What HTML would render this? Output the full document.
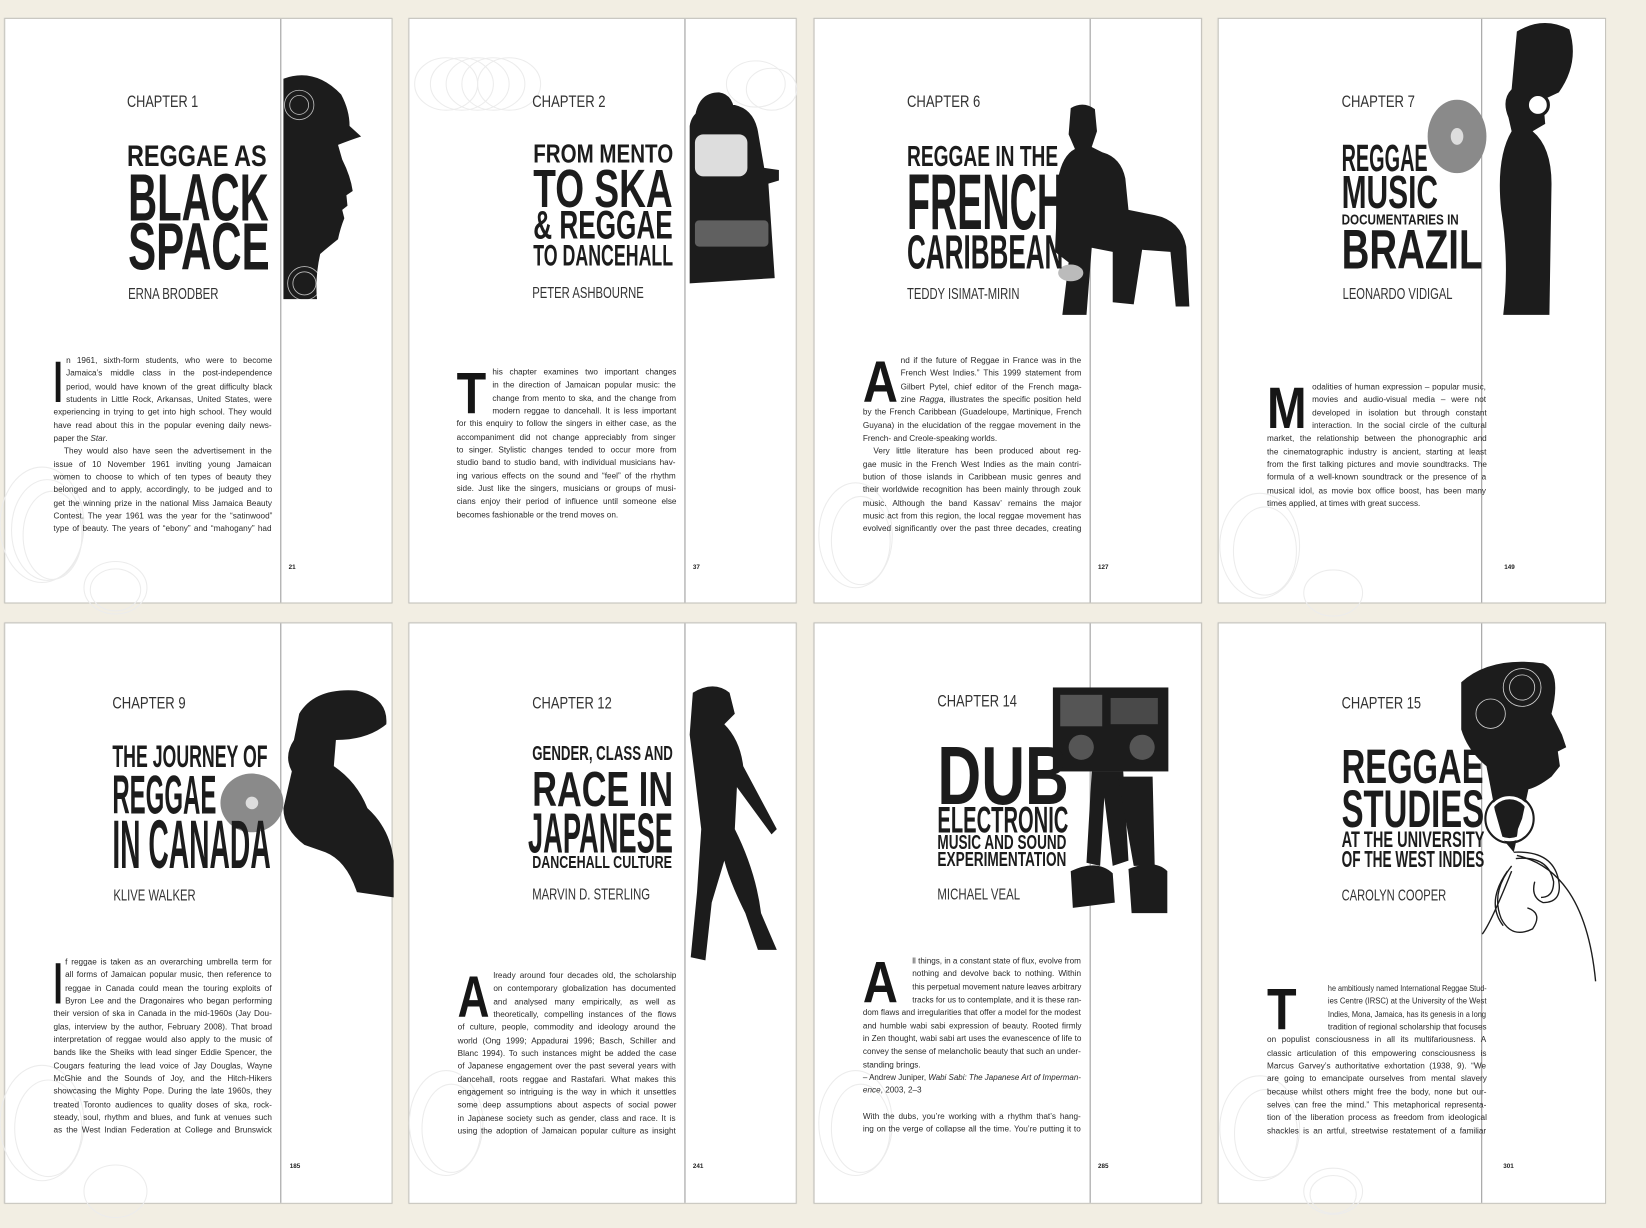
<!DOCTYPE html>
<html><head><meta charset="utf-8"><style>
html,body{margin:0;padding:0;width:1646px;height:1228px;overflow:hidden;background:#f2eee3;}
#c{position:absolute;left:0;top:0;width:1568px;height:1170px;transform:scale(1.04974,1.04957);transform-origin:0 0;font-family:"Liberation Sans",sans-serif;}
.pg{position:absolute;width:370px;background:#fff;border:1px solid #c4c2bb;box-sizing:border-box;box-shadow:0 0 1px #bbb;}
.r1{top:17px;height:558px}.r2{top:593px;height:554px}
.dv{position:absolute;top:0;bottom:0;width:1px;background:#9a9a9a;}
.f{position:absolute;line-height:1;white-space:nowrap;color:#1c1c1c;}
.f span{display:inline-block;transform-origin:0 0;}
.b{font-weight:bold;}
.ch{color:#333;font-weight:normal;}
.bd{position:absolute;font-size:7.8px;color:#2a2a2a;}
.bd div{height:12.35px;line-height:12.35px;white-space:nowrap;overflow:visible;}
.bd div span{display:inline-block;transform-origin:0 50%;}
.dc{position:absolute;font-weight:bold;color:#161616;line-height:1;}
.dc span{display:inline-block;transform-origin:0 0;}
.pn{position:absolute;font-size:6px;font-weight:bold;color:#222;}
svg{position:absolute;left:0;top:0;}
</style></head><body><div id="c">

<div class="pg r1" style="left:4px"><div class="dv" style="left:262px"></div></div>
<div class="pg r1" style="left:389px"><div class="dv" style="left:262px"></div></div>
<div class="pg r1" style="left:775px"><div class="dv" style="left:262px"></div></div>
<div class="pg r1" style="left:1160px"><div class="dv" style="left:250px"></div></div>
<div class="pg r2" style="left:4px"><div class="dv" style="left:262px"></div></div>
<div class="pg r2" style="left:389px"><div class="dv" style="left:262px"></div></div>
<div class="pg r2" style="left:775px"><div class="dv" style="left:262px"></div></div>
<div class="pg r2" style="left:1160px"><div class="dv" style="left:250px"></div></div>

<svg width="1568" height="1170" viewBox="0 0 1568 1170">
<g fill="none" stroke="#ececec" stroke-width="1">
 <ellipse cx="40" cy="500" rx="40" ry="55"/><ellipse cx="45" cy="505" rx="34" ry="48"/><ellipse cx="50" cy="510" rx="28" ry="42"/>
 <ellipse cx="110" cy="560" rx="30" ry="25"/><ellipse cx="110" cy="562" rx="24" ry="20"/>
 <ellipse cx="425" cy="80" rx="30" ry="25"/><ellipse cx="440" cy="80" rx="30" ry="25"/><ellipse cx="455" cy="80" rx="30" ry="25"/><ellipse cx="470" cy="80" rx="30" ry="25"/><ellipse cx="485" cy="80" rx="30" ry="25"/>
 <ellipse cx="720" cy="80" rx="28" ry="22"/><ellipse cx="735" cy="85" rx="24" ry="20"/>
 <ellipse cx="815" cy="510" rx="35" ry="50"/><ellipse cx="820" cy="515" rx="28" ry="42"/>
 <ellipse cx="1200" cy="520" rx="38" ry="50"/><ellipse cx="1205" cy="525" rx="30" ry="42"/><ellipse cx="1270" cy="565" rx="28" ry="22"/>
 <ellipse cx="40" cy="1070" rx="40" ry="55"/><ellipse cx="46" cy="1075" rx="32" ry="46"/><ellipse cx="110" cy="1135" rx="30" ry="25"/>
 <ellipse cx="425" cy="1070" rx="35" ry="50"/><ellipse cx="430" cy="1075" rx="28" ry="42"/>
 <ellipse cx="815" cy="1070" rx="35" ry="50"/><ellipse cx="820" cy="1075" rx="28" ry="42"/>
 <ellipse cx="1200" cy="1075" rx="38" ry="50"/><ellipse cx="1206" cy="1080" rx="30" ry="42"/><ellipse cx="1270" cy="1135" rx="28" ry="22"/><ellipse cx="1270" cy="1138" rx="22" ry="18"/>
</g>
<path fill="#1c1c1c" d="M270 75 Q300 64 325 90 Q333 105 333 120 L344 130 Q332 134 322 138 L326 152 Q334 168 336 182 L330 186 L331 196 L326 200 L328 208 Q324 218 322 228 Q312 236 305 242 Q300 265 302 285 L270 285 Z"/>
<g fill="none" stroke="#fff" stroke-width="0.8" opacity="0.7"><circle cx="285" cy="100" r="14"/><circle cx="285" cy="100" r="9"/><circle cx="290" cy="270" r="16"/><circle cx="290" cy="270" r="11"/></g>
<path fill="#1c1c1c" d="M657 120 Q660 100 690 100 L700 100 Q718 104 722 125 L728 160 L742 162 L742 172 L732 175 L738 265 L657 270 Z"/>
<path fill="#1c1c1c" d="M662 112 Q665 88 685 88 Q700 90 700 112 Z"/>
<rect x="662" y="128" width="50" height="40" rx="8" fill="#fff" opacity=".85"/>
<rect x="662" y="210" width="70" height="25" rx="4" fill="#fff" opacity=".3"/>
<path fill="#1c1c1c" d="M1020 103 Q1032 96 1043 104 L1045 125 L1040 140 L1050 145 Q1068 150 1072 170 L1075 200 L1100 205 Q1125 210 1130 235 L1133 292 L1120 292 L1115 240 L1088 238 L1080 290 L1060 288 L1060 240 L1040 236 L1035 300 L1012 300 L1018 250 L1005 240 L1008 170 Q1012 148 1024 142 L1018 128 Z"/>
<ellipse cx="1020" cy="260" rx="12" ry="8" fill="#bbb"/>
<path fill="#1c1c1c" d="M1445 30 Q1470 15 1495 28 Q1505 60 1485 88 L1470 95 L1472 118 L1460 125 Q1478 140 1478 175 L1476 300 L1432 300 Q1438 250 1430 200 Q1425 150 1440 125 L1437 112 Q1430 95 1440 85 Z"/>
<ellipse cx="1388" cy="130" rx="28" ry="35" fill="#8a8a8a"/><ellipse cx="1388" cy="130" rx="6" ry="8" fill="#ddd"/>
<circle cx="1465" cy="100" r="10" fill="#fff" stroke="#1c1c1c" stroke-width="3"/>
<path fill="#1c1c1c" d="M285 680 Q300 655 340 658 Q370 665 368 690 Q350 705 320 705 L318 730 Q340 745 350 770 Q372 790 375 820 L375 855 L340 850 Q330 820 310 812 L290 805 Q270 790 270 770 L278 735 Q270 720 280 705 Z"/>
<ellipse cx="240" cy="765" rx="30" ry="28" fill="#8a8a8a"/><ellipse cx="240" cy="765" rx="6" ry="6" fill="#ddd"/>
<path fill="#1c1c1c" d="M660 660 Q680 648 695 660 L700 680 L690 690 Q705 705 708 730 L740 790 L735 795 L702 750 L700 790 Q720 830 725 870 L740 905 L722 905 L710 870 Q695 840 690 820 L678 860 L672 915 L658 912 L664 850 L668 790 L662 740 L657 700 Z"/>
<rect x="1003" y="655" width="110" height="80" fill="#1c1c1c"/>
<rect x="1010" y="662" width="40" height="30" fill="#fff" opacity=".25"/><circle cx="1030" cy="712" r="12" fill="#555"/><circle cx="1088" cy="712" r="12" fill="#555"/><rect x="1058" y="665" width="45" height="25" fill="#fff" opacity=".2"/>
<path fill="#1c1c1c" d="M1040 735 L1070 735 L1075 820 L1060 825 L1052 760 L1048 825 L1035 822 Z"/>
<path fill="#1c1c1c" d="M1065 740 L1098 740 L1100 825 L1080 825 Z"/>
<path fill="#1c1c1c" d="M1020 830 Q1045 818 1060 832 L1062 860 L1022 865 Z M1075 828 Q1100 818 1112 830 L1112 870 L1078 870 Z"/>
<path fill="#1c1c1c" d="M1392 650 Q1420 625 1470 632 Q1488 640 1478 680 L1488 700 L1492 712 L1484 716 L1486 730 L1478 740 Q1465 750 1456 752 L1450 780 L1446 790 Q1445 800 1442 812 L1432 800 L1424 772 Q1420 750 1416 730 Q1398 715 1392 695 Z"/>
<circle cx="1438" cy="780" r="20" fill="none" stroke="#fff" stroke-width="3"/><circle cx="1438" cy="780" r="23" fill="none" stroke="#1c1c1c" stroke-width="2"/>
<g fill="none" stroke="#1c1c1c" stroke-width="1.3"><path d="M1442 812 Q1480 810 1485 840 Q1488 860 1470 860 Q1458 855 1462 840"/><path d="M1444 818 Q1475 815 1480 840 Q1480 855 1468 855"/><path d="M1440 825 Q1420 850 1430 875 Q1440 895 1460 885 Q1470 870 1455 865"/><path d="M1436 830 Q1415 860 1432 882"/><path d="M1445 815 Q1510 830 1520 935"/><path d="M1440 830 Q1420 880 1412 890"/></g>
<g fill="none" stroke="#fff" stroke-width="0.8" opacity=".8"><circle cx="1450" cy="655" r="18"/><circle cx="1450" cy="655" r="12"/><circle cx="1420" cy="680" r="14"/></g>
</svg>

<div class="f ch" style="left:121px;top:89.6px;font-size:16px" data-w="68"><span>CHAPTER 1</span></div>
<div class="f b" style="left:121px;top:134.7px;font-size:28px" data-w="133"><span>REGGAE AS</span></div>
<div class="f b" style="left:122px;top:155.5px;font-size:64px" data-w="134"><span>BLACK</span></div>
<div class="f b" style="left:122px;top:202.5px;font-size:64px" data-w="135"><span>SPACE</span></div>
<div class="f ch" style="left:122px;top:273.2px;font-size:15px" data-w="86"><span>ERNA BRODBER</span></div>

<div class="f ch" style="left:507px;top:89.6px;font-size:16px" data-w="70"><span>CHAPTER 2</span></div>
<div class="f b" style="left:508px;top:135px;font-size:25px" data-w="133"><span>FROM MENTO</span></div>
<div class="f b" style="left:508px;top:154px;font-size:51px" data-w="133"><span>TO SKA</span></div>
<div class="f b" style="left:508px;top:195.5px;font-size:38px" data-w="133"><span>&amp; REGGAE</span></div>
<div class="f b" style="left:508px;top:229.7px;font-size:28px" data-w="133"><span>TO DANCEHALL</span></div>
<div class="f ch" style="left:507px;top:272.2px;font-size:15px" data-w="106"><span>PETER ASHBOURNE</span></div>

<div class="f ch" style="left:864px;top:89.6px;font-size:16px" data-w="70"><span>CHAPTER 6</span></div>
<div class="f b" style="left:864px;top:135.8px;font-size:27px" data-w="144"><span>REGGAE IN THE</span></div>
<div class="f b" style="left:864px;top:155.2px;font-size:75px" data-w="150"><span>FRENCH</span></div>
<div class="f b" style="left:864px;top:216.6px;font-size:46px" data-w="149"><span>CARIBBEAN</span></div>
<div class="f ch" style="left:864px;top:273.2px;font-size:15px" data-w="107"><span>TEDDY ISIMAT-MIRIN</span></div>

<div class="f ch" style="left:1278px;top:89.6px;font-size:16px" data-w="70"><span>CHAPTER 7</span></div>
<div class="f b" style="left:1278px;top:132.8px;font-size:36px" data-w="82"><span>REGGAE</span></div>
<div class="f b" style="left:1278px;top:161.8px;font-size:44px" data-w="92"><span>MUSIC</span></div>
<div class="f b" style="left:1278px;top:202.4px;font-size:14px" data-w="112"><span>DOCUMENTARIES IN</span></div>
<div class="f b" style="left:1278px;top:211.8px;font-size:53px" data-w="134"><span>BRAZIL</span></div>
<div class="f ch" style="left:1279px;top:273.2px;font-size:15px" data-w="105"><span>LEONARDO VIDIGAL</span></div>

<div class="f ch" style="left:107px;top:662.6px;font-size:16px" data-w="70"><span>CHAPTER 9</span></div>
<div class="f b" style="left:107px;top:706.5px;font-size:30px" data-w="148"><span>THE JOURNEY OF</span></div>
<div class="f b" style="left:107px;top:731.9px;font-size:52px" data-w="99"><span>REGGAE</span></div>
<div class="f b" style="left:107px;top:772.4px;font-size:65px" data-w="151"><span>IN CANADA</span></div>
<div class="f ch" style="left:108px;top:846.2px;font-size:15px" data-w="78"><span>KLIVE WALKER</span></div>

<div class="f ch" style="left:507px;top:662.6px;font-size:16px" data-w="76"><span>CHAPTER 12</span></div>
<div class="f b" style="left:507px;top:708.8px;font-size:19px" data-w="134"><span>GENDER, CLASS AND</span></div>
<div class="f b" style="left:507px;top:727.5px;font-size:47px" data-w="134"><span>RACE IN</span></div>
<div class="f b" style="left:503px;top:766.7px;font-size:54px" data-w="138"><span>JAPANESE</span></div>
<div class="f b" style="left:507px;top:813px;font-size:17px" data-w="133"><span>DANCEHALL CULTURE</span></div>
<div class="f ch" style="left:507px;top:845.2px;font-size:15px" data-w="112"><span>MARVIN D. STERLING</span></div>

<div class="f ch" style="left:893px;top:660.6px;font-size:16px" data-w="76"><span>CHAPTER 14</span></div>
<div class="f b" style="left:893px;top:698.7px;font-size:79px" data-w="125"><span>DUB</span></div>
<div class="f b" style="left:893px;top:763.9px;font-size:35px" data-w="125"><span>ELECTRONIC</span></div>
<div class="f b" style="left:893px;top:793.8px;font-size:19px" data-w="123"><span>MUSIC AND SOUND</span></div>
<div class="f b" style="left:893px;top:809.8px;font-size:19px" data-w="123"><span>EXPERIMENTATION</span></div>
<div class="f ch" style="left:893px;top:845.2px;font-size:15px" data-w="79"><span>MICHAEL VEAL</span></div>

<div class="f ch" style="left:1278px;top:662.6px;font-size:16px" data-w="76"><span>CHAPTER 15</span></div>
<div class="f b" style="left:1278px;top:706.6px;font-size:46px" data-w="135"><span>REGGAE</span></div>
<div class="f b" style="left:1278px;top:746.1px;font-size:50px" data-w="136"><span>STUDIES</span></div>
<div class="f b" style="left:1278px;top:789.5px;font-size:21px" data-w="136"><span>AT THE UNIVERSITY</span></div>
<div class="f b" style="left:1278px;top:808.4px;font-size:22px" data-w="136"><span>OF THE WEST INDIES</span></div>
<div class="f ch" style="left:1278px;top:846.2px;font-size:15px" data-w="100"><span>CAROLYN COOPER</span></div>

<div class="dc" style="left:51px;top:335.5px;font-size:56px" data-w="9"><span>I</span></div>
<div class="dc" style="left:435px;top:346.5px;font-size:56px" data-w="28"><span>T</span></div>
<div class="dc" style="left:822px;top:335.5px;font-size:56px" data-w="33"><span>A</span></div>
<div class="dc" style="left:1207px;top:360.5px;font-size:56px" data-w="38"><span>M</span></div>
<div class="dc" style="left:51px;top:908.5px;font-size:56px" data-w="9"><span>I</span></div>
<div class="dc" style="left:436px;top:921.5px;font-size:56px" data-w="30"><span>A</span></div>
<div class="dc" style="left:822px;top:907.5px;font-size:56px" data-w="33"><span>A</span></div>
<div class="dc" style="left:1207px;top:933.5px;font-size:56px" data-w="28"><span>T</span></div>

<div class="bd" style="left:51px;top:338px;width:208px">
<div style="padding-left:12px"><span>n 1961, sixth-form students, who were to become</span></div>
<div style="padding-left:12px"><span>Jamaica’s middle class in the post-independence</span></div>
<div style="padding-left:12px"><span>period, would have known of the great difficulty black</span></div>
<div style="padding-left:12px"><span>students in Little Rock, Arkansas, United States, were</span></div>
<div><span>experiencing in trying to get into high school. They would</span></div>
<div><span>have read about this in the popular evening daily news-</span></div>
<div class="e"><span>paper the <i>Star</i>.</span></div>
<div style="padding-left:10px"><span>They would also have seen the advertisement in the</span></div>
<div><span>issue of 10 November 1961 inviting young Jamaican</span></div>
<div><span>women to choose to which of ten types of beauty they</span></div>
<div><span>belonged and to apply, accordingly, to be judged and to</span></div>
<div><span>get the winning prize in the national Miss Jamaica Beauty</span></div>
<div><span>Contest. The year 1961 was the year for the “satinwood”</span></div>
<div><span>type of beauty. The years of “ebony” and “mahogany” had</span></div>
</div>

<div class="bd" style="left:435px;top:349px;width:209px">
<div style="padding-left:34px"><span>his chapter examines two important changes</span></div>
<div style="padding-left:34px"><span>in the direction of Jamaican popular music: the</span></div>
<div style="padding-left:34px"><span>change from mento to ska, and the change from</span></div>
<div style="padding-left:34px"><span>modern reggae to dancehall. It is less important</span></div>
<div><span>for this enquiry to follow the singers in either case, as the</span></div>
<div><span>accompaniment did not change appreciably from singer</span></div>
<div><span>to singer. Stylistic changes tended to occur more from</span></div>
<div><span>studio band to studio band, with individual musicians hav-</span></div>
<div><span>ing various effects on the sound and “feel” of the rhythm</span></div>
<div><span>side. Just like the singers, musicians or groups of musi-</span></div>
<div><span>cians enjoy their period of influence until someone else</span></div>
<div class="e"><span>becomes fashionable or the trend moves on.</span></div>
</div>

<div class="bd" style="left:822px;top:338px;width:208px">
<div style="padding-left:36px"><span>nd if the future of Reggae in France was in the</span></div>
<div style="padding-left:36px"><span>French West Indies.” This 1999 statement from</span></div>
<div style="padding-left:36px"><span>Gilbert Pytel, chief editor of the French maga-</span></div>
<div style="padding-left:36px"><span>zine <i>Ragga</i>, illustrates the specific position held</span></div>
<div><span>by the French Caribbean (Guadeloupe, Martinique, French</span></div>
<div><span>Guyana) in the elucidation of the reggae movement in the</span></div>
<div class="e"><span>French- and Creole-speaking worlds.</span></div>
<div style="padding-left:10px"><span>Very little literature has been produced about reg-</span></div>
<div><span>gae music in the French West Indies as the main contri-</span></div>
<div><span>bution of those islands in Caribbean music genres and</span></div>
<div><span>their worldwide recognition has been mainly through zouk</span></div>
<div><span>music. Although the band Kassav’ remains the major</span></div>
<div><span>music act from this region, the local reggae movement has</span></div>
<div><span>evolved significantly over the past three decades, creating</span></div>
</div>

<div class="bd" style="left:1207px;top:363px;width:209px">
<div style="padding-left:43px"><span>odalities of human expression – popular music,</span></div>
<div style="padding-left:43px"><span>movies and audio-visual media – were not</span></div>
<div style="padding-left:43px"><span>developed in isolation but through constant</span></div>
<div style="padding-left:43px"><span>interaction. In the social circle of the cultural</span></div>
<div><span>market, the relationship between the phonographic and</span></div>
<div><span>the cinematographic industry is ancient, starting at least</span></div>
<div><span>from the first talking pictures and movie soundtracks. The</span></div>
<div><span>formula of a well-known soundtrack or the presence of a</span></div>
<div><span>musical idol, as movie box office boost, has been many</span></div>
<div class="e"><span>times applied, at times with great success.</span></div>
</div>

<div class="bd" style="left:51px;top:911px;width:208px">
<div style="padding-left:11px"><span>f reggae is taken as an overarching umbrella term for</span></div>
<div style="padding-left:11px"><span>all forms of Jamaican popular music, then reference to</span></div>
<div style="padding-left:11px"><span>reggae in Canada could mean the touring exploits of</span></div>
<div style="padding-left:11px"><span>Byron Lee and the Dragonaires who began performing</span></div>
<div><span>their version of ska in Canada in the mid-1960s (Jay Dou-</span></div>
<div><span>glas, interview by the author, February 2008). That broad</span></div>
<div><span>interpretation of reggae would also apply to the music of</span></div>
<div><span>bands like the Sheiks with lead singer Eddie Spencer, the</span></div>
<div><span>Cougars featuring the lead voice of Jay Douglas, Wayne</span></div>
<div><span>McGhie and the Sounds of Joy, and the Hitch-Hikers</span></div>
<div><span>showcasing the Mighty Pope. During the late 1960s, they</span></div>
<div><span>treated Toronto audiences to quality doses of ska, rock-</span></div>
<div><span>steady, soul, rhythm and blues, and funk at venues such</span></div>
<div><span>as the West Indian Federation at College and Brunswick</span></div>
</div>

<div class="bd" style="left:436px;top:924px;width:208px">
<div style="padding-left:34px"><span>lready around four decades old, the scholarship</span></div>
<div style="padding-left:34px"><span>on contemporary globalization has documented</span></div>
<div style="padding-left:34px"><span>and analysed many empirically, as well as</span></div>
<div style="padding-left:34px"><span>theoretically, compelling instances of the flows</span></div>
<div><span>of culture, people, commodity and ideology around the</span></div>
<div><span>world (Ong 1999; Appadurai 1996; Basch, Schiller and</span></div>
<div><span>Blanc 1994). To such instances might be added the case</span></div>
<div><span>of Japanese engagement over the past several years with</span></div>
<div><span>dancehall, roots reggae and Rastafari. What makes this</span></div>
<div><span>engagement so intriguing is the way in which it unsettles</span></div>
<div><span>some deep assumptions about aspects of social power</span></div>
<div><span>in Japanese society such as gender, class and race. It is</span></div>
<div><span>using the adoption of Jamaican popular culture as insight</span></div>
</div>

<div class="bd" style="left:822px;top:910px;width:208px">
<div style="padding-left:47px"><span>ll things, in a constant state of flux, evolve from</span></div>
<div style="padding-left:47px"><span>nothing and devolve back to nothing. Within</span></div>
<div style="padding-left:47px"><span>this perpetual movement nature leaves arbitrary</span></div>
<div style="padding-left:47px"><span>tracks for us to contemplate, and it is these ran-</span></div>
<div><span>dom flaws and irregularities that offer a model for the modest</span></div>
<div><span>and humble wabi sabi expression of beauty. Rooted firmly</span></div>
<div><span>in Zen thought, wabi sabi art uses the evanescence of life to</span></div>
<div><span>convey the sense of melancholic beauty that such an under-</span></div>
<div class="e"><span>standing brings.</span></div>
<div><span>– Andrew Juniper, <i>Wabi Sabi: The Japanese Art of Imperman-</i></span></div>
<div class="e"><span><i>ence</i>, 2003, 2–3</span></div>
<div class="e"><span>&nbsp;</span></div>
<div><span>With the dubs, you’re working with a rhythm that’s hang-</span></div>
<div><span>ing on the verge of collapse all the time. You’re putting it to</span></div>
</div>

<div class="bd" style="left:1207px;top:936px;width:209px">
<div style="padding-left:58px"><span>he ambitiously named International Reggae Stud-</span></div>
<div style="padding-left:58px"><span>ies Centre (IRSC) at the University of the West</span></div>
<div style="padding-left:58px"><span>Indies, Mona, Jamaica, has its genesis in a long</span></div>
<div style="padding-left:58px"><span>tradition of regional scholarship that focuses</span></div>
<div><span>on populist consciousness in all its multifariousness. A</span></div>
<div><span>classic articulation of this empowering consciousness is</span></div>
<div><span>Marcus Garvey’s authoritative exhortation (1938, 9). “We</span></div>
<div><span>are going to emancipate ourselves from mental slavery</span></div>
<div><span>because whilst others might free the body, none but our-</span></div>
<div><span>selves can free the mind.” This metaphorical representa-</span></div>
<div><span>tion of the liberation process as freedom from ideological</span></div>
<div><span>shackles is an artful, streetwise restatement of a familiar</span></div>
</div>

<div class="pn" style="left:275px;top:538px">21</div>
<div class="pn" style="left:660px;top:538px">37</div>
<div class="pn" style="left:1046px;top:538px">127</div>
<div class="pn" style="left:1433px;top:538px">149</div>
<div class="pn" style="left:276px;top:1109px">185</div>
<div class="pn" style="left:660px;top:1109px">241</div>
<div class="pn" style="left:1046px;top:1109px">285</div>
<div class="pn" style="left:1432px;top:1109px">301</div>

</div>
<script>
document.querySelectorAll('.f,.dc').forEach(function(d){
  var w=parseFloat(d.getAttribute('data-w'));var s=d.querySelector('span');
  var n=s.offsetWidth; if(n>0){s.style.transform='scaleX('+(w/n)+')';}
});
document.querySelectorAll('.bd').forEach(function(b){
  var W=parseFloat(b.style.width);
  b.querySelectorAll('div').forEach(function(l){
    var s=l.querySelector('span'); if(!s)return;
    var pad=parseFloat(l.style.paddingLeft)||0; var avail=W-pad;
    var nat=s.offsetWidth;
    if(nat>avail){s.style.transform='scaleX('+(avail/nat)+')';}
    else if(!l.classList.contains('e')){
      var sp=(s.textContent.match(/ /g)||[]).length;
      if(sp>0){s.style.wordSpacing=((avail-nat)/sp)+'px';
        var n2=s.offsetWidth; if(n2>avail){s.style.transform='scaleX('+(avail/n2)+')';}}
    }
  });
});
</script>
</body></html>
